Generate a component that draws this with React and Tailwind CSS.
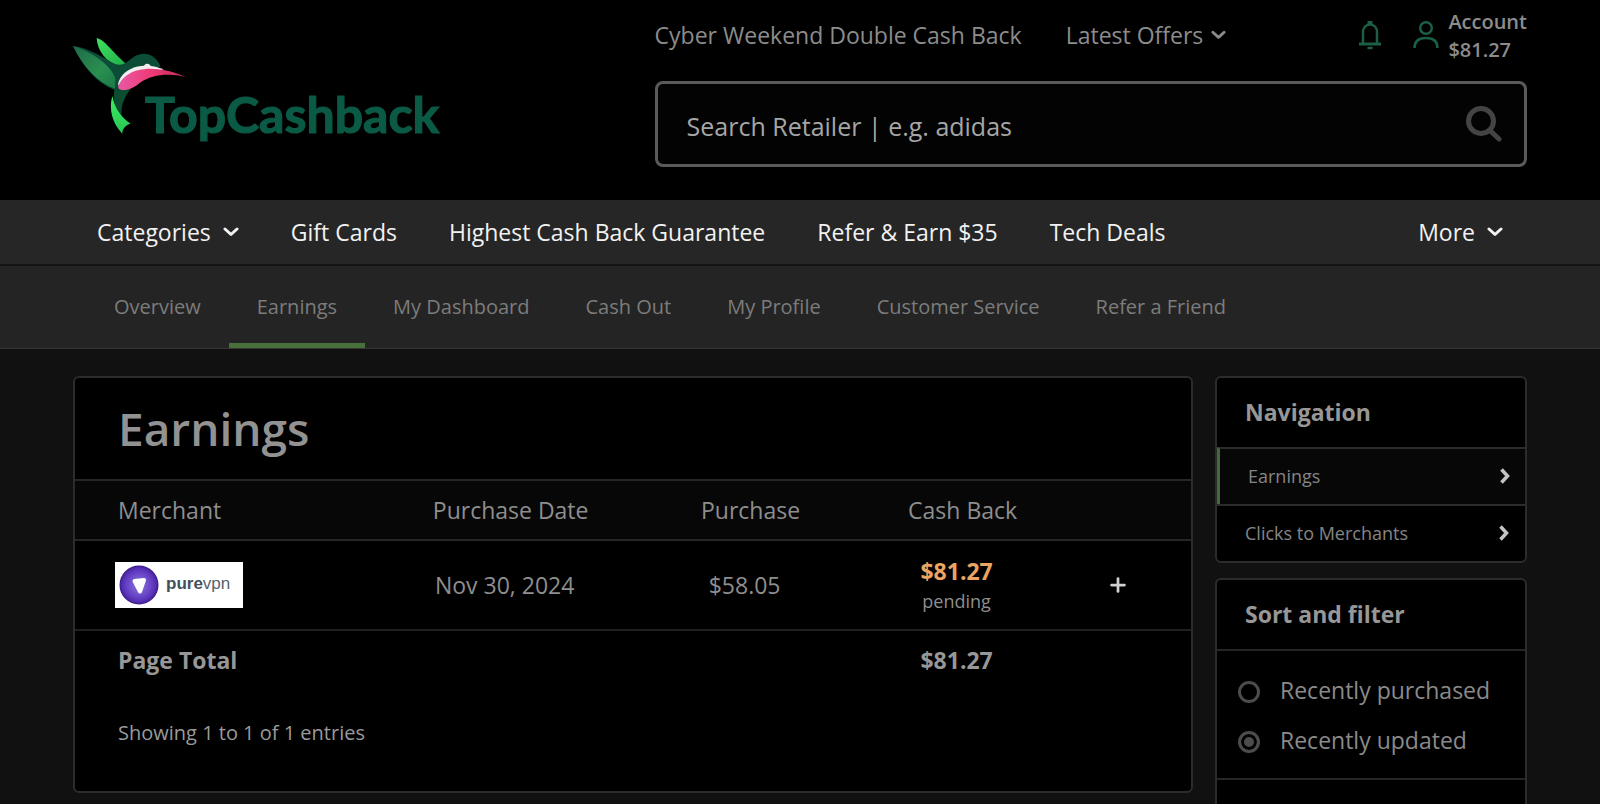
import React, { useState } from 'react';
import { Plus } from 'lucide-react';

const mainLinks = ['Gift Cards', 'Highest Cash Back Guarantee', 'Refer & Earn $35', 'Tech Deals'];

const accountTabs = [
  'Overview',
  'Earnings',
  'My Dashboard',
  'Cash Out',
  'My Profile',
  'Customer Service',
  'Refer a Friend',
];

const earnings = [
  { merchant: 'purevpn', date: 'Nov 30, 2024', purchase: '$58.05', cashback: '$81.27', status: 'pending' },
];

const sideLinks = ['Earnings', 'Clicks to Merchants'];
const sortOptions = ['Recently purchased', 'Recently updated'];

function Chevron({ className }) {
  return (
    <svg viewBox="0 0 16 10" className={className} fill="none" stroke="currentColor" strokeWidth="3" strokeLinecap="round" strokeLinejoin="round" aria-hidden="true">
      <path d="M2 2l6 5.5L14 2" />
    </svg>
  );
}

function Logo() {
  return (
    <svg viewBox="0 0 380 110" className="h-[110px] w-[380px]" role="img" aria-label="TopCashback">
      <defs>
        <linearGradient id="wing" x1="0" y1="0" x2="1" y2="1">
          <stop offset="0" stopColor="#1c6a48" />
          <stop offset="0.6" stopColor="#2a8f50" />
          <stop offset="1" stopColor="#1a7a48" />
        </linearGradient>
        <linearGradient id="bright" x1="0" y1="0" x2="1" y2="1">
          <stop offset="0" stopColor="#3fe060" />
          <stop offset="1" stopColor="#1fae48" />
        </linearGradient>
        <linearGradient id="tail" x1="0" y1="0" x2="0" y2="1">
          <stop offset="0" stopColor="#3ff060" />
          <stop offset="1" stopColor="#27c455" />
        </linearGradient>
        <linearGradient id="throat" x1="0" y1="0" x2="1" y2="0">
          <stop offset="0" stopColor="#e85aa4" />
          <stop offset="0.5" stopColor="#ee3a74" />
          <stop offset="1" stopColor="#c02a55" />
        </linearGradient>
      </defs>
      <g transform="scale(0.3333) translate(-39 -51)">
        <path d="M110 54C136 60 152 92 200 133L172 140C138 122 112 94 110 54Z" fill="url(#bright)" />
        <path d="M39 78C92 84 142 122 168 133C192 138 204 124 220 112C246 92 286 98 302 140L240 150L176 200L165 210C110 190 66 136 39 78Z" fill="#0c4d38" />
        <path d="M39 78C84 92 150 128 166 176L165 206C112 188 70 140 39 78Z" fill="url(#wing)" />
        <path d="M164 204C156 246 168 276 186 296C180 262 190 236 212 206Z" fill="#0c4d30" />
        <path d="M157 228C146 266 156 310 187 341C187 325 198 315 212 311C184 292 164 266 157 228Z" fill="url(#tail)" />
        <path d="M174 196C178 162 212 138 252 137C258 129 268 130 272 138C286 139 298 143 312 148L240 165Z" fill="#f2eef0" />
        <path d="M174 200C184 172 214 150 256 147C304 144 346 158 378 171C324 158 276 164 240 188C220 206 192 216 176 206Z" fill="url(#throat)" />
      </g>
      <text x="72" y="96" fontFamily="Lato, sans-serif" fontWeight="700" fontSize="50" fill="#0b5a45" stroke="#0b5a45" strokeWidth="1.200">
        TopCashback
      </text>
    </svg>
  );
}

function PureVpnLogo() {
  return (
    <svg viewBox="0 0 128 46" className="ml-10 h-[46px] w-[128px]" role="img" aria-label="purevpn">
      <defs>
        <radialGradient id="orb">
          <stop offset="0" stopColor="#8f7ae0" />
          <stop offset="0.65" stopColor="#6540c4" />
          <stop offset="0.85" stopColor="#5530b4" />
          <stop offset="1" stopColor="#3c1a86" />
        </radialGradient>
      </defs>
      <rect width="128" height="46" fill="#fff" />
      <circle cx="24" cy="23" r="19.500" fill="url(#orb)" />
      <path d="M19.500 19L29 18L25 29.500Z" fill="#fff" stroke="#fff" strokeWidth="4" strokeLinejoin="round" />
      <text x="51" y="27" fontFamily="'Liberation Sans', Arial, sans-serif" fontSize="17" fill="#56626e">
        <tspan fontWeight="700" fill="#42505c">pure</tspan>vpn
      </text>
    </svg>
  );
}

function Header() {
  return (
    <header className="flex h-[200px] justify-between bg-black px-[73px]">
      <a href="#home" className="pt-[37px]">
        <Logo />
      </a>
      <div className="w-3/5 pt-2">
        <div className="flex h-[73px] items-start text-[23px] leading-[54px] text-[#8c8c8c]">
          <a href="#cyber-weekend">Cyber Weekend Double Cash Back</a>
          <button type="button" className="ml-11 flex items-center gap-2">
            Latest Offers
            <Chevron className="h-[10px] w-[15px]" />
          </button>
          <button type="button" aria-label="Notifications" className="ml-auto mt-[12px] text-[#1b5f45]">
            <svg viewBox="0 0 24 30" className="h-[30px] w-6" fill="none" stroke="currentColor" strokeWidth="2.500" aria-hidden="true">
              <path d="M5 24V12.500C5 7.500 8 4.500 12 4.500S19 7.500 19 12.500V24" />
              <path d="M1 24H23" strokeWidth="3" />
              <path d="M9.500 3H14.500" strokeWidth="4" />
              <path d="M10.500 28H13.500" strokeLinecap="round" />
            </svg>
          </button>
          <a href="#account" className="ml-[31px] flex gap-[9px] text-xl font-semibold leading-7 text-[#8c8c8c]">
            <svg viewBox="0 0 26 28" className="mt-[13px] h-7 w-[26px] text-[#1b5f45]" fill="none" stroke="currentColor" strokeWidth="2.500" aria-hidden="true">
              <circle cx="13" cy="7" r="5.800" />
              <path d="M1.500 27C1.500 20 6 17 13 17S24.500 20 24.500 27" />
            </svg>
            <span>
              Account
              <br />
              $81.27
            </span>
          </a>
        </div>
        <form className="flex h-[86px] items-center rounded-lg border-3 border-[#5a5a5a] bg-[#030303] pl-[29px] pr-[22px]" onSubmit={(e) => e.preventDefault()}>
          <input
            type="text"
            aria-label="Search Retailer"
            placeholder="Search Retailer | e.g. adidas"
            className="h-full flex-1 bg-transparent pt-[3px] text-[25px] text-[#a6a6a6] placeholder-[#a6a6a6] outline-none"
          />
          <button type="submit" aria-label="Search" className="text-[#444444]">
            <svg viewBox="0 0 38 38" className="h-[38px] w-[38px]" fill="none" stroke="currentColor" strokeWidth="5" strokeLinecap="round" aria-hidden="true">
              <circle cx="17" cy="16" r="12.500" />
              <path d="M26.500 26L35 34" />
            </svg>
          </button>
        </form>
      </div>
    </header>
  );
}

function MainNav() {
  return (
    <nav className="flex h-[66px] items-center border-b-2 border-[#131313] bg-[#262626] px-[97px] text-[23px] text-[#f2f2f2]">
      <div className="flex flex-1 gap-[52px]">
        <button type="button" className="flex items-center gap-3">
          Categories
          <Chevron className="h-[10px] w-4" />
        </button>
        {mainLinks.map((link) => (
          <a key={link} href="#nav">{link}</a>
        ))}
      </div>
      <button type="button" className="flex items-center gap-3">
        More
        <Chevron className="h-[10px] w-4" />
      </button>
    </nav>
  );
}

function AccountNav() {
  return (
    <nav className="flex h-[83px] border-b border-[#343434] bg-[#242424] px-[86px] text-xl text-[#7c7c7c]">
      {accountTabs.map((tab) => (
        <a
          key={tab}
          href="#tab"
          className={
            tab === 'Earnings'
              ? 'flex items-center border-b-5 border-[#47703a] px-7 pt-[5px]'
              : 'flex items-center border-b-5 border-transparent px-7 pt-[5px]'
          }
        >
          {tab}
        </a>
      ))}
    </nav>
  );
}

function EarningsTable() {
  return (
    <main className="h-[417px] flex-1 rounded-md border-2 border-[#2c2c2c] bg-black text-[#8e8e8e]">
      <h1 className="border-b-2 border-[#262626] pl-[43px] text-[46px] font-semibold leading-[101px] text-[#929292]">Earnings</h1>
      <table className="w-full table-fixed text-[23px]">
        <thead className="border-b-2 border-[#262626] bg-[#070707]">
          <tr className="h-[59px]">
            <th className="w-[28%] pl-[43px] text-left font-normal">Merchant</th>
            <th className="w-[21%] pl-3 font-normal">Purchase Date</th>
            <th className="w-[22%] pl-3 font-normal">Purchase</th>
            <th className="w-[16%] pl-3 font-normal">Cash Back</th>
            <th aria-label="Details" />
          </tr>
        </thead>
        <tbody className="border-b-2 border-[#202020]">
          {earnings.map((row) => (
            <tr key={row.merchant} className="h-[90px] text-center">
              <td><PureVpnLogo /></td>
              <td>{row.date}</td>
              <td>{row.purchase}</td>
              <td>
                <div className="font-bold leading-8 text-[#eba562]">{row.cashback}</div>
                <div className="text-lg leading-7">{row.status}</div>
              </td>
              <td>
                <button type="button" aria-label="Show details" className="mx-auto block text-[#d0d0d0]">
                  <Plus size={22} strokeWidth={3} />
                </button>
              </td>
            </tr>
          ))}
        </tbody>
        <tfoot>
          <tr className="h-[60px] font-bold text-[#979797]">
            <td className="pl-[43px]">Page Total</td>
            <td />
            <td />
            <td className="text-center">$81.27</td>
            <td />
          </tr>
        </tfoot>
      </table>
      <p className="pl-[43px] pt-[29px] text-xl text-[#9a9a9a]">Showing 1 to 1 of 1 entries</p>
    </main>
  );
}

function Sidebar() {
  const [sort, setSort] = useState('Recently updated');

  return (
    <aside className="flex w-[312px] flex-col gap-[15px]">
      <section className="rounded-md border-2 border-[#2c2c2c] bg-black text-[#858585]">
        <h2 className="pl-7 text-[23px] font-bold leading-[69px] text-[#979797]">Navigation</h2>
        {sideLinks.map((link) => (
          <a
            key={link}
            href="#side"
            className={
              link === 'Earnings'
                ? 'flex h-[57px] items-center justify-between border-l-3 border-t-2 border-l-[#3f6c39] border-t-[#2c2c2c] bg-[#070707] pb-[2px] pl-7 pr-[15px] text-lg'
                : 'flex h-[57px] items-center justify-between border-t-2 border-[#2c2c2c] pb-[2px] pl-7 pr-4 text-lg'
            }
          >
            {link}
            <svg viewBox="0 0 10 16" className="h-4 w-[10px] text-[#c4c4c4]" fill="none" stroke="currentColor" strokeWidth="3.500" aria-hidden="true">
              <path d="M1.500 1.500L7.500 8L1.500 14.500" />
            </svg>
          </a>
        ))}
      </section>
      <section className="rounded-md border-2 border-[#2c2c2c] bg-black text-[#8a8a8a]">
        <h2 className="border-b-2 border-[#262626] pl-7 text-[23px] font-bold leading-[69px] text-[#979797]">Sort and filter</h2>
        <div className="flex flex-col gap-[18px] border-b-2 border-[#262626] pb-[22px] pl-[21px] pt-[23px]">
          {sortOptions.map((option) => (
            <label key={option} className="flex items-center gap-5 text-[23px] leading-8">
              <input
                type="radio"
                name="sort"
                checked={sort === option}
                onChange={() => setSort(option)}
                className="mt-1 h-[22px] w-[22px] appearance-none rounded-full border-3 border-[#4c4c4c] bg-black checked:bg-[#4c4c4c] checked:shadow-[inset_0_0_0_3px_#000]"
              />
              {option}
            </label>
          ))}
        </div>
        <div className="h-10" />
      </section>
    </aside>
  );
}

function App() {
  return (
    <div className="min-h-screen max-h-screen min-w-[1400px] overflow-hidden bg-[#111111] font-['Open_Sans',sans-serif]">
      <Header />
      <MainNav />
      <AccountNav />
      <div className="flex items-start gap-[22px] px-[73px] pt-[27px]">
        <EarningsTable />
        <Sidebar />
      </div>
    </div>
  );
}

export default App;
